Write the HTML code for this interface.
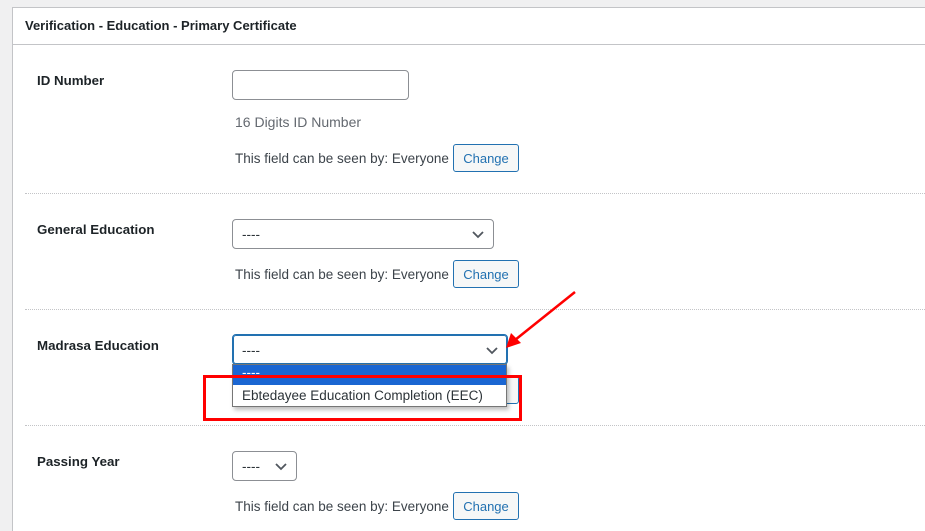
<!DOCTYPE html>
<html style="height:531px;overflow:hidden"><head><style>
body{margin:0;width:925px;height:531px;background:#f0f0f1;font-family:"Liberation Sans",sans-serif;position:relative;overflow:hidden;color:#3c434a;font-size:13.5px}
.a{position:absolute}
.panel{left:12px;top:7px;width:913px;height:524px;background:#fff;border:1px solid #c3c4c7;border-bottom:none;border-right:none;box-sizing:border-box}
.hdr{left:12px;top:44px;width:913px;height:1px;background:#c3c4c7}
.title{left:25px;top:18px;font-weight:bold;color:#1d2327;font-size:13px}
.lbl{left:37px;font-weight:bold;color:#1d2327;font-size:13.3px}
.div{left:25px;width:900px;border-top:1px dotted #c3c4c7;height:0}
.box{border:1px solid #8c8f94;border-radius:4px;background:#fff;box-sizing:border-box}
.txt{left:235px;color:#3c434a}
.btn{border:1px solid #2271b1;border-radius:3px;background:#f6f7f7;color:#2271b1;box-sizing:border-box;text-align:center;line-height:27px;font-size:13px}
.sel span{position:absolute;left:9px;top:7px;color:#2c3338}
.chev{position:absolute;right:9px;top:9px}
</style></head><body>
<div class="a panel"></div>
<div class="a hdr"></div>
<div class="a title">Verification - Education - Primary Certificate</div>

<div class="a lbl" style="top:73px">ID Number</div>
<div class="a box" style="left:232px;top:70px;width:177px;height:30px"></div>
<div class="a txt" style="top:114px;color:#646970;font-size:14px">16 Digits ID Number</div>
<div class="a txt" style="top:151px">This field can be seen by: Everyone</div>
<div class="a btn" style="left:453px;top:144px;width:66px;height:28px">Change</div>
<div class="a div" style="top:193px"></div>

<div class="a lbl" style="top:222px">General Education</div>
<div class="a box sel" style="left:232px;top:219px;width:262px;height:30px"><span>----</span><svg class="chev" width="12" height="10" viewBox="0 0 12 10"><path d="M1 3l5 5 5-5" fill="none" stroke="#50575e" stroke-width="1.8"/></svg></div>
<div class="a txt" style="top:267px">This field can be seen by: Everyone</div>
<div class="a btn" style="left:453px;top:260px;width:66px;height:28px">Change</div>
<div class="a div" style="top:309px"></div>

<div class="a lbl" style="top:338px">Madrasa Education</div>
<div class="a btn" style="left:453px;top:376px;width:66px;height:28px"></div>
<div class="a box sel" style="left:232px;top:334px;width:276px;height:31px;border-color:#2271b1;box-shadow:0 0 0 1px #2271b1 inset"><span style="top:8px">----</span><svg class="chev" width="12" height="10" viewBox="0 0 12 10" style="top:10px"><path d="M1 3l5 5 5-5" fill="none" stroke="#50575e" stroke-width="1.8"/></svg></div>
<div class="a" style="left:232px;top:364px;width:275px;height:43px;background:#fff;border:1px solid #767676;box-sizing:border-box;box-shadow:2px 3px 4px rgba(0,0,0,.25)">
<div style="height:20px;background:#1a66d2;color:#fff;padding-left:9px;line-height:16px">----</div>
<div style="padding-left:9px;line-height:21px;color:#2c3338;font-size:13.5px">Ebtedayee Education Completion (EEC)</div>
</div>
<div class="a" style="left:203px;top:375px;width:319px;height:46px;border:3px solid #ff0000;box-sizing:border-box"></div>
<svg class="a" style="left:0;top:0" width="925" height="531"><line x1="575" y1="292" x2="515" y2="340" stroke="#f00" stroke-width="2.5"/><polygon points="506,348 511,333 521,343" fill="#f00"/></svg>
<div class="a div" style="top:425px"></div>

<div class="a lbl" style="top:454px">Passing Year</div>
<div class="a box sel" style="left:232px;top:451px;width:65px;height:30px"><span>----</span><svg class="chev" width="12" height="10" viewBox="0 0 12 10"><path d="M1 3l5 5 5-5" fill="none" stroke="#50575e" stroke-width="1.8"/></svg></div>
<div class="a txt" style="top:499px">This field can be seen by: Everyone</div>
<div class="a btn" style="left:453px;top:492px;width:66px;height:28px">Change</div>
</body></html>
